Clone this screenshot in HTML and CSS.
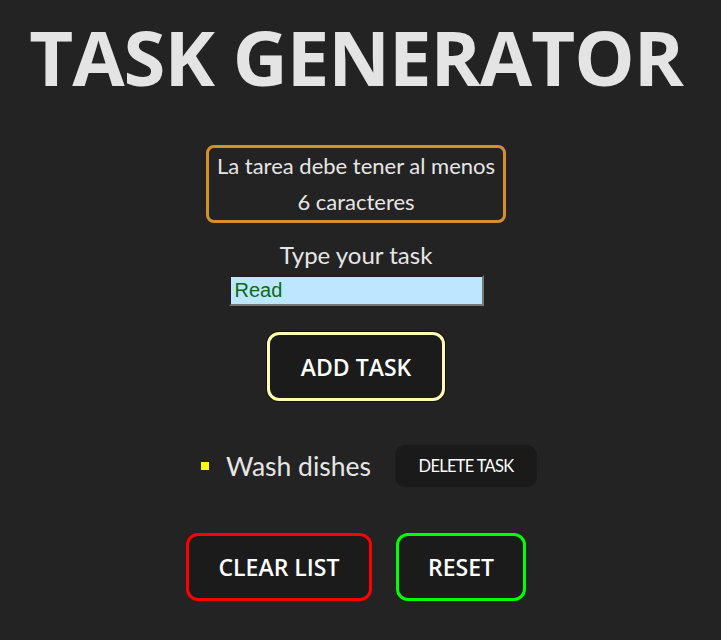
FILE: index.html
```html
<!DOCTYPE html>
<html lang="en">
<head>
<meta charset="utf-8">
<title>Task Generator</title>
<link rel="stylesheet" href="styles.css">
</head>
<body>
<main class="app">
  <h1 class="title">TASK GENERATOR</h1>
  <div class="warning">La tarea debe tener al menos<br>6 caracteres</div>
  <label class="label" for="task">Type your task</label>
  <input class="task-input" id="task" type="text" value="Read">
  <button class="btn btn-add">ADD TASK</button>
  <ul class="list">
    <li class="item"><span class="item-text">Wash dishes</span><button class="btn-delete">DELETE TASK</button></li>
  </ul>
  <div class="actions">
    <button class="btn btn-clear">CLEAR LIST</button>
    <button class="btn btn-reset">RESET</button>
  </div>
</main>
</body>
</html>
```
FILE: styles.css
```css
html, body {
  margin: 0;
  padding: 0;
  background: #232323;
}
body {
  font-family: "Lato", "Open Sans", sans-serif;
  color: #e6e6e6;
}
.app {
  width: 712px;
  display: flex;
  flex-direction: column;
  align-items: center;
}
.title {
  margin: 13px 0 0;
  font-family: "Open Sans", sans-serif;
  font-weight: 700;
  font-size: 76px;
  line-height: 88px;
  color: #e4e4e4;
  letter-spacing: -1px;
}
.warning {
  margin-top: 44px;
  box-sizing: border-box;
  width: 300px;
  padding: 0;
  border: 3px solid #d4912a;
  border-radius: 8px;
  text-align: center;
  font-size: 22px;
  line-height: 36px;
}
.label {
  margin-top: 17px;
  font-size: 24px;
  line-height: 30px;
}
.task-input {
  margin-top: 5px;
  box-sizing: border-box;
  width: 255px;
  height: 31px;
  padding: 2px 4px;
  border: 2px inset #767676;
  background: #bde6ff;
  color: #0a6b12;
  font-family: "Liberation Sans", Arial, sans-serif;
  font-size: 20px;
}
.btn {
  box-sizing: border-box;
  background: #1b1b1b;
  color: #fff;
  font-family: "Open Sans", sans-serif;
  font-weight: 600;
  font-size: 23px;
  border-radius: 12px;
  cursor: pointer;
}
.btn-add {
  margin-top: 26px;
  width: 178px;
  height: 69px;
  border: 3px solid #fffab4;
  box-shadow: 0 0 0 1px #111;
}
.list {
  margin: 44px 0 0;
  padding: 0 0 0 26px;
  list-style: none;
}
.item {
  display: flex;
  align-items: center;
  gap: 24px;
}
.item-text {
  display: flex;
  align-items: center;
  gap: 17px;
  font-size: 26.5px;
}
.item-text::before {
  content: "";
  width: 8px;
  height: 8px;
  background: #ffff00;
}
.btn-delete {
  width: 142px;
  height: 42px;
  border: none;
  border-radius: 10px;
  background: #1a1a1a;
  color: #fff;
  font-family: "Lato", sans-serif;
  font-size: 16.5px;
  letter-spacing: -0.7px;
  cursor: pointer;
}
.actions {
  margin-top: 46px;
  display: flex;
  gap: 24px;
}
.btn-clear {
  width: 186px;
  height: 68px;
  border: 3px solid #ff0000;
}
.btn-reset {
  width: 130px;
  height: 68px;
  border: 3px solid #00ff00;
}
```
